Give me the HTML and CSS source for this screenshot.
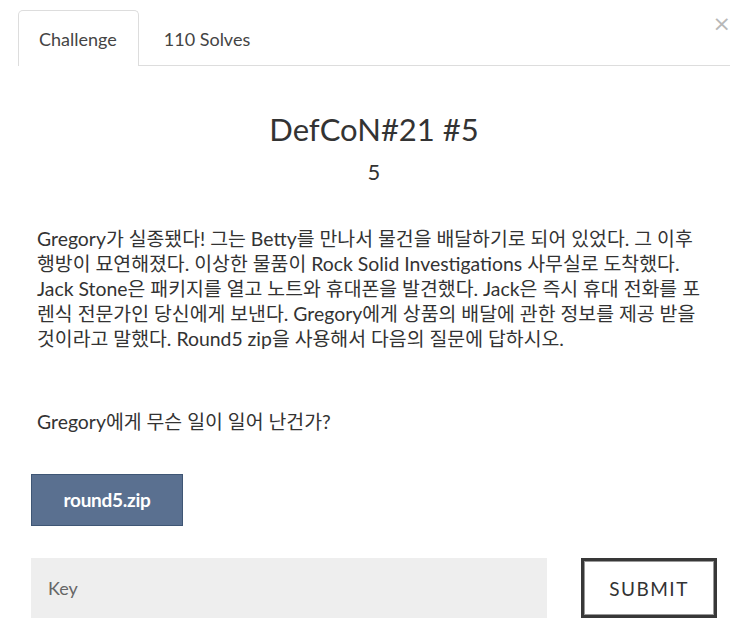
FILE: index.html
```html
<!DOCTYPE html>
<html lang="ko">
<head>
<meta charset="UTF-8">
<meta name="viewport" content="width=device-width, initial-scale=1.0">
<title>DefCoN#21 #5</title>
<link rel="stylesheet" href="styles.css">
</head>
<body>

<div class="modal">
    <div class="tabs-row">
        <ul class="tabs">
            <li class="tab active">Challenge</li>
            <li class="tab">110 Solves</li>
        </ul>
        <button class="close" aria-label="Close">&times;</button>
    </div>

    <div class="tab-content">
        <h2 class="chal-name">DefCoN#21 #5</h2>
        <h3 class="chal-value">5</h3>

        <div class="chal-desc">
            <p>Gregory가 실종됐다! 그는 Betty를 만나서 물건을 배달하기로 되어 있었다. 그 이후<br>
            행방이 묘연해졌다. 이상한 물품이 Rock Solid Investigations 사무실로 도착했다.<br>
            Jack Stone은 패키지를 열고 노트와 휴대폰을 발견했다. Jack은 즉시 휴대 전화를 포<br>
            렌식 전문가인 당신에게 보낸다. Gregory에게 상품의 배달에 관한 정보를 제공 받을<br>
            것이라고 말했다. Round5 zip을 사용해서 다음의 질문에 답하시오.</p>
            <p class="question">Gregory에게 무슨 일이 일어 난건가?</p>
        </div>

        <div class="files">
            <a class="file-btn" href="#">round5.zip</a>
        </div>

        <form class="submit-row" onsubmit="return false;">
            <input type="text" class="key-input" placeholder="Key">
            <button type="submit" class="submit-btn">SUBMIT</button>
        </form>
    </div>
</div>

</body>
</html>
```

FILE: styles.css
```css
body {
    font-family: Lato, "Noto Sans CJK KR", sans-serif;
    background-color: #ffffff;
    color: #333;
    margin: 0;
}
.modal {
    width: 712px;
    padding: 10px 20px 0 18px;
}
.tabs-row {
    display: flex;
    align-items: flex-start;
    border-bottom: 1px solid #ddd;
}
.tabs {
    list-style: none;
    display: flex;
    margin: 0;
    padding: 0;
    flex: 1;
}
.tab {
    padding: 0 21px 0 24px;
    height: 54px;
    line-height: 56px;
    font-size: 18px;
    color: #444;
    border: 1px solid transparent;
    border-bottom: none;
    border-radius: 5px 5px 0 0;
    margin-bottom: -1px;
}
.tab.active {
    padding: 0 21px 0 20px;
    border-color: #ddd;
    background-color: #fff;
    height: 55px;
}
.close {
    background: none;
    border: none;
    font-family: "DejaVu Sans", sans-serif;
    font-size: 22px;
    line-height: 1;
    color: #b8b8b8;
    padding: 0;
    margin: 3px -1px 0 0;
    cursor: pointer;
}
.tab-content {
    padding: 0 19px;
}
.chal-name {
    text-align: center;
    font-weight: 400;
    font-size: 31px;
    margin: 43px 0 0;
    line-height: 40px;
}
.chal-value {
    text-align: center;
    font-weight: 400;
    font-size: 22px;
    margin: 8px 0 0;
    line-height: 30px;
}
.chal-desc {
    margin-top: 39px;
    font-size: 19.4px;
    line-height: 25px;
    white-space: nowrap;
}
.chal-desc p {
    margin: 0;
}
.chal-desc .question {
    margin-top: 58px;
}
.files {
    margin-top: 40px;
}
.file-btn {
    display: inline-block;
    width: 150px;
    height: 50px;
    line-height: 50px;
    margin-left: -6px;
    text-align: center;
    background-color: #5a7090;
    border: 1px solid #3f5675;
    color: #fff;
    font-weight: 700;
    font-size: 19px;
    text-decoration: none;
    letter-spacing: -0.3px;
}
.submit-row {
    display: flex;
    margin: 32px -6px 0 -6px;
    gap: 34px;
}
.key-input {
    width: 516px;
    height: 60px;
    box-sizing: border-box;
    border: none;
    background-color: #eee;
    padding: 0 17px;
    font-family: Lato, sans-serif;
    font-size: 18px;
    color: #333;
}
.key-input::placeholder {
    color: #666;
}
.submit-btn {
    width: 136px;
    height: 60px;
    background-color: #fff;
    border: 3px solid #383838;
    box-shadow: inset 0 0 0 1px #999;
    font-family: Lato, sans-serif;
    font-size: 19px;
    letter-spacing: 1.5px;
    color: #333;
    cursor: pointer;
}
```
